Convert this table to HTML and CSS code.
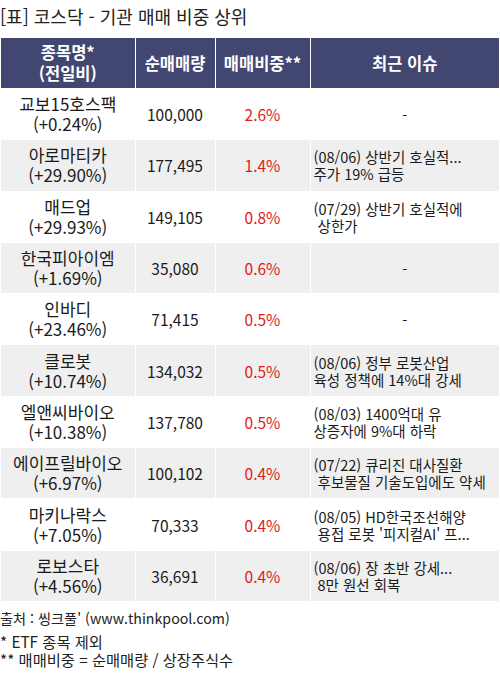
FILE: index.html
```html
<!DOCTYPE html>
<html lang="ko">
<head>
<meta charset="utf-8">
<link rel="stylesheet" href="styles.css">
</head>
<body>
<div class="page">
  <h1 class="title">[표] 코스닥 - 기관 매매 비중 상위</h1>
  <table class="tbl">
    <colgroup>
      <col class="c1"><col class="c2"><col class="c3"><col class="c4">
    </colgroup>
    <thead>
      <tr>
        <th>종목명*<br>(전일비)</th>
        <th>순매매량</th>
        <th>매매비중**</th>
        <th>최근 이슈</th>
      </tr>
    </thead>
    <tbody>
      <tr><td class="name">교보15호스팩<br>(+0.24%)</td><td class="num">100,000</td><td class="pct">2.6%</td><td class="issue dash">-</td></tr>
      <tr><td class="name">아로마티카<br>(+29.90%)</td><td class="num">177,495</td><td class="pct">1.4%</td><td class="issue">(08/06) 상반기 호실적...<br>주가 19% 급등</td></tr>
      <tr><td class="name">매드업<br>(+29.93%)</td><td class="num">149,105</td><td class="pct">0.8%</td><td class="issue">(07/29) 상반기 호실적에<br>&nbsp;상한가</td></tr>
      <tr><td class="name">한국피아이엠<br>(+1.69%)</td><td class="num">35,080</td><td class="pct">0.6%</td><td class="issue dash">-</td></tr>
      <tr><td class="name">인바디<br>(+23.46%)</td><td class="num">71,415</td><td class="pct">0.5%</td><td class="issue dash">-</td></tr>
      <tr><td class="name">클로봇<br>(+10.74%)</td><td class="num">134,032</td><td class="pct">0.5%</td><td class="issue">(08/06) 정부 로봇산업<br>육성 정책에 14%대 강세</td></tr>
      <tr><td class="name">엘앤씨바이오<br>(+10.38%)</td><td class="num">137,780</td><td class="pct">0.5%</td><td class="issue">(08/03) 1400억대 유<br>상증자에 9%대 하락</td></tr>
      <tr><td class="name">에이프릴바이오<br>(+6.97%)</td><td class="num">100,102</td><td class="pct">0.4%</td><td class="issue">(07/22) 큐리진 대사질환<br>&nbsp;후보물질 기술도입에도 약세</td></tr>
      <tr><td class="name">마키나락스<br>(+7.05%)</td><td class="num">70,333</td><td class="pct">0.4%</td><td class="issue">(08/05) HD한국조선해양<br>&nbsp;용접 로봇 '피지컬AI' 프...</td></tr>
      <tr><td class="name">로보스타<br>(+4.56%)</td><td class="num">36,691</td><td class="pct">0.4%</td><td class="issue">(08/06) 장 초반 강세...<br>&nbsp;8만 원선 회복</td></tr>
    </tbody>
  </table>
  <p class="source">출처 : 씽크풀' (www.thinkpool.com)</p>
  <p class="notes">* ETF 종목 제외<br>** 매매비중 = 순매매량 / 상장주식수</p>
</div>
</body>
</html>
```
FILE: styles.css
```css
html, body {
  margin: 0;
  padding: 0;
  background: #ffffff;
}
body {
  font-family: "Noto Sans CJK KR", "Noto Sans", sans-serif;
  color: #111;
}
.page {
  width: 500px;
}
.title {
  margin: 0;
  padding: 5px 0 0 0;
  height: 38px;
  box-sizing: border-box;
  font-size: 18px;
  font-weight: normal;
  line-height: 23px;
  color: #222;
  white-space: nowrap;
}
.tbl {
  margin-left: 1px;
  width: 498px;
  border-collapse: collapse;
  table-layout: fixed;
}
.c1 { width: 134px; }
.c2 { width: 80px; }
.c3 { width: 95px; }
.c4 { width: 189px; }
.tbl th {
  background: #414770;
  color: #ffffff;
  font-size: 16.5px;
  font-weight: bold;
  line-height: 21px;
  height: 50px;
  padding: 0;
  border-left: 1px solid #ffffff;
  text-align: center;
  vertical-align: middle;
}
.tbl th:first-child { border-left: none; }
.tbl td {
  height: 50.3px;
  padding: 0;
  border-left: 1px solid #ffffff;
  border-top: 1px solid #ffffff;
  text-align: center;
  vertical-align: middle;
  font-size: 15.5px;
  line-height: 20px;
  color: #1a1a1a;
}
.tbl td.name {
  font-size: 17px;
  line-height: 20px;
}
.tbl td:first-child { border-left: none; }
.tbl tbody tr:nth-child(even) td {
  background: #efefef;
}
.tbl td.pct {
  color: #e21a1a;
}
.tbl td.issue {
  text-align: left;
  padding-left: 3px;
  font-size: 14.5px;
  line-height: 17px;
  white-space: nowrap;
  overflow: hidden;
}
.tbl td.issue.dash {
  text-align: center;
  padding-left: 0;
}
.source {
  margin: 7px 0 0 0;
  font-size: 14.2px;
  line-height: 20px;
  color: #222;
}
.notes {
  margin: 4px 0 0 0;
  font-size: 15.3px;
  line-height: 18px;
  color: #222;
}
```
